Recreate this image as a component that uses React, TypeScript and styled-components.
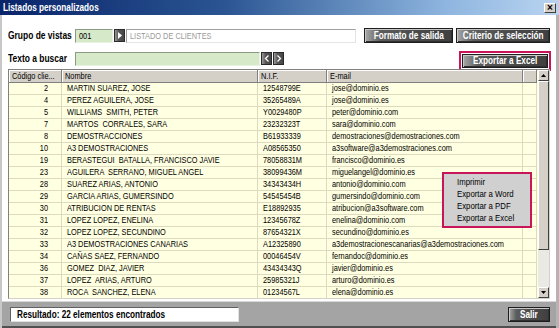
import React from "react"
import styled, { createGlobalStyle } from "styled-components"

const GlobalStyle = createGlobalStyle`
  html, body { margin: 0; padding: 0; background: #fff; }
  body {
    font-family: "Liberation Sans", Arial, sans-serif;
    font-size: 9px;
    color: #000;
  }
  * { box-sizing: border-box; }
`

type Row = { code: string; name: string; nif: string; email: string }

const rows: Row[] = [
  { code: "2", name: "MARTIN SUAREZ, JOSE", nif: "12548799E", email: "jose@dominio.es" },
  { code: "4", name: "PEREZ AGUILERA, JOSE", nif: "35265489A", email: "jose@dominio.es" },
  { code: "5", name: "WILLIAMS  SMITH, PETER", nif: "Y0029480P", email: "peter@dominio.com" },
  { code: "7", name: "MARTOS  CORRALES, SARA", nif: "23232323T", email: "sara@dominio.com" },
  { code: "8", name: "DEMOSTRACCIONES", nif: "B61933339", email: "demostraciones@demostraciones.com" },
  { code: "10", name: "A3 DEMOSTRACIONES", nif: "A08565350", email: "a3software@a3demostraciones.com" },
  { code: "19", name: "BERASTEGUI  BATALLA, FRANCISCO JAVIE", nif: "78058831M", email: "francisco@dominio.es" },
  { code: "23", name: "AGUILERA  SERRANO, MIGUEL ANGEL", nif: "38099436M", email: "miguelangel@dominio.es" },
  { code: "28", name: "SUAREZ ARIAS, ANTONIO", nif: "34343434H", email: "antonio@dominio.com" },
  { code: "29", name: "GARCIA ARIAS, GUMERSINDO", nif: "54545454B", email: "gumersindo@dominio.com" },
  { code: "30", name: "ATRIBUCION DE RENTAS", nif: "E18892935", email: "atribucion@a3software.com" },
  { code: "31", name: "LOPEZ LOPEZ, ENELINA", nif: "12345678Z", email: "enelina@dominio.com" },
  { code: "32", name: "LOPEZ LOPEZ, SECUNDINO", nif: "87654321X", email: "secundino@dominio.es" },
  { code: "33", name: "A3 DEMOSTRACIONES CANARIAS", nif: "A12325890", email: "a3demostracionescanarias@a3demostraciones.com" },
  { code: "34", name: "CAÑAS SAEZ, FERNANDO", nif: "00046454V", email: "fernandoc@dominio.es" },
  { code: "36", name: "GOMEZ  DIAZ, JAVIER", nif: "43434343Q", email: "javier@dominio.es" },
  { code: "37", name: "LOPEZ  ARIAS, ARTURO", nif: "25985321J", email: "arturo@dominio.es" },
  { code: "38", name: "ROCA  SANCHEZ, ELENA", nif: "01234567L", email: "elena@dominio.es" },
]

const menuItems = ["Imprimir", "Exportar a Word", "Exportar a PDF", "Exportar a Excel"]

const COLS = "53px 196px 69px 196px 14px"

export default function App() {
  return (
    <>
      <GlobalStyle />
      <Window>
        <TitleBar>
          <Title><T>Listados personalizados</T></Title>
          <CloseButton>×</CloseButton>
        </TitleBar>
        <Body>
          <FormRow>
            <Label><T>Grupo de vistas</T></Label>
            <GreenInput $width={38}><T>001</T></GreenInput>
            <SmallButton>
              <svg width="6" height="7" viewBox="0 0 6 7"><path d="M1 0 L5 3.5 L1 7 Z" fill="#fff" /></svg>
            </SmallButton>
            <TextInput><T>LISTADO DE CLIENTES</T></TextInput>
            <Spacer />
            <DarkButton $width={89}><T $o="center">Formato de salida</T></DarkButton>
            <DarkButton $width={94}><T $o="center">Criterio de selección</T></DarkButton>
          </FormRow>
          <FormRow $top={8}>
            <Label><T>Texto a buscar</T></Label>
            <GreenInput $width={185} />
            <NavGroup>
              <SmallButton>
                <svg width="6" height="7" viewBox="0 0 6 7"><path d="M4.5 0.5 L1.5 3.5 L4.5 6.5" stroke="#fff" strokeWidth="1.3" fill="none" /></svg>
              </SmallButton>
              <SmallButton>
                <svg width="6" height="7" viewBox="0 0 6 7"><path d="M1.5 0.5 L4.5 3.5 L1.5 6.5" stroke="#fff" strokeWidth="1.3" fill="none" /></svg>
              </SmallButton>
            </NavGroup>
            <Spacer />
            <Highlight>
              <DarkButton $width={86} $height={14}><T $o="center">Exportar a Excel</T></DarkButton>
            </Highlight>
          </FormRow>
          <TableFrame>
            <TableArea>
              <HeaderRow>
                <HeaderCell><T>Código clie...</T></HeaderCell>
                <HeaderCell><T>Nombre</T></HeaderCell>
                <HeaderCell><T>N.I.F.</T></HeaderCell>
                <HeaderCell><T>E-mail</T></HeaderCell>
                <HeaderCell />
              </HeaderRow>
              {rows.map(r => (
                <DataRow key={r.code}>
                  <Cell $align="right"><T $o="right">{r.code}</T></Cell>
                  <Cell><T>{r.name}</T></Cell>
                  <Cell><T>{r.nif}</T></Cell>
                  <Cell><T>{r.email}</T></Cell>
                  <Cell />
                </DataRow>
              ))}
            </TableArea>
            <ScrollBar>
              <ScrollArrow>
                <svg width="5" height="3" viewBox="0 0 5 3"><path d="M0 3 L2.5 0 L5 3 Z" fill="#000" /></svg>
              </ScrollArrow>
              <ScrollThumb />
              <ScrollTrack />
              <ScrollArrow>
                <svg width="5" height="3" viewBox="0 0 5 3"><path d="M0 0 L2.5 3 L5 0 Z" fill="#000" /></svg>
              </ScrollArrow>
            </ScrollBar>
            <ContextMenu>
              {menuItems.map(m => <MenuItem key={m}><T>{m}</T></MenuItem>)}
            </ContextMenu>
          </TableFrame>
          <StatusBar>
            <StatusBox><T>Resultado: 22 elementos encontrados</T></StatusBox>
            <Spacer />
            <DarkButton $width={42} $height={15}><T $o="center">Salir</T></DarkButton>
          </StatusBar>
        </Body>
      </Window>
    </>
  )
}

// the reference uses a narrow Tahoma-like face; squeeze Liberation Sans to its widths
const T = styled.span<{ $o?: "left" | "right" | "center" }>`
  display: inline-block;
  white-space: pre;
  transform: scaleX(0.82);
  transform-origin: ${p => p.$o ?? "left"} center;
`

const Window = styled.div`
  width: 559px;
  height: 328px;
  display: flex;
  flex-direction: column;
  background: #fff;
  overflow: hidden;
`

const TitleBar = styled.div`
  height: 15px;
  flex: none;
  display: flex;
  align-items: center;
  justify-content: space-between;
  padding: 0 3px 0 3px;
  background: linear-gradient(90deg, #0a246a 0%, #2a5592 40%, #8fb6e0 80%, #b9d4f0 100%);
`

const Title = styled.span`
  color: #fff;
  font-weight: bold;
  font-size: 10px;
`

const CloseButton = styled.span`
  width: 12px;
  height: 10px;
  display: flex;
  align-items: center;
  justify-content: center;
  background: #d4d0c8;
  border: 1px solid;
  border-color: #fff #404040 #404040 #fff;
  font-size: 10px;
  font-weight: bold;
  line-height: 1;
  color: #000;
`

const Body = styled.div`
  flex: 1;
  display: flex;
  flex-direction: column;
  padding: 13px 0 0 6px;
  border-left: 2px solid #c8c8c8;
  border-right: 3px solid #b4b4b4;
`

const FormRow = styled.div<{ $top?: number }>`
  display: flex;
  align-items: center;
  height: 15px;
  margin-top: ${p => p.$top ?? 0}px;
  padding-right: 6px;
`

const Label = styled.span`
  width: 67px;
  flex: none;
  font-weight: bold;
  font-size: 10.3px;
  white-space: nowrap;
`

const GreenInput = styled.div<{ $width: number }>`
  width: ${p => p.$width}px;
  height: 14px;
  flex: none;
  background: #d6e9c9;
  border: 1px solid;
  border-color: #8c9c84 #e8f2e0 #e8f2e0 #8c9c84;
  padding: 0 3px;
  line-height: 12px;
`

const SmallButton = styled.div`
  width: 11px;
  height: 13px;
  flex: none;
  margin-left: 1px;
  display: flex;
  align-items: center;
  justify-content: center;
  background: linear-gradient(90deg, #9a9a9a, #555 40%, #474747);
  border: 1px solid #2a2a2a;
`

const NavGroup = styled.div`
  display: flex;
  gap: 0;
  margin-left: 0;
`

const TextInput = styled.div`
  width: 230px;
  height: 14px;
  flex: none;
  margin-left: 1px;
  padding: 0 3px;
  line-height: 12px;
  color: #9a9a9a;
  background: #fff;
  border: 1px solid;
  border-color: #a0a0a0 #e4e4e4 #e4e4e4 #a0a0a0;
`

const Spacer = styled.div`
  flex: 1;
`

const DarkButton = styled.div<{ $width: number; $height?: number }>`
  width: ${p => p.$width}px;
  height: ${p => p.$height ?? 15}px;
  flex: none;
  margin-left: 3px;
  display: flex;
  align-items: center;
  justify-content: center;
  color: #fff;
  font-weight: bold;
  font-size: 10px;
  white-space: nowrap;
  background: linear-gradient(90deg, #a8a8a8 0%, #5c5c5c 18%, #4a4a4a 60%, #404040 100%);
  border: 1px solid #1e1e1e;
  box-shadow: inset 1px 1px 0 #c8c8c8, inset -1px -1px 0 #303030;
`

const Highlight = styled.div`
  padding: 1px;
  border: 2px solid #c8155a;
  margin-top: 4px;
  margin-right: -1px;
  & > div { margin-left: 0; }
`

const TableFrame = styled.div`
  position: relative;
  margin: 3px 6px 0 0;
  height: 230px;
  display: flex;
  border: 1px solid;
  border-color: #808080 #d4d0c8 #d4d0c8 #808080;
  background: #ffffe1;
`

const TableArea = styled.div`
  flex: 1;
  overflow: hidden;
`

const HeaderRow = styled.div`
  display: grid;
  grid-template-columns: ${COLS};
  height: 13px;
`

const HeaderCell = styled.div`
  background: #d4d0c8;
  border-right: 1px solid #808080;
  border-bottom: 1px solid #808080;
  box-shadow: inset 1px 1px 0 #fff;
  padding: 0 3px;
  line-height: 12px;
  white-space: nowrap;
  overflow: hidden;
`

const DataRow = styled.div`
  display: grid;
  grid-template-columns: ${COLS};
  height: 12px;
  background: #ffffe1;
`

const Cell = styled.div<{ $align?: "right" }>`
  border-right: 1px solid #dedac0;
  border-bottom: 1px solid #dedac0;
  padding: 0 4px 0 5px;
  padding-right: ${p => (p.$align === "right" ? "13px" : "4px")};
  text-align: ${p => p.$align ?? "left"};
  line-height: 11px;
  white-space: pre;
  overflow: hidden;
`

const ScrollBar = styled.div`
  width: 11px;
  flex: none;
  display: flex;
  flex-direction: column;
  background: #d4d0c8;
`

const ScrollArrow = styled.div`
  height: 11px;
  flex: none;
  display: flex;
  align-items: center;
  justify-content: center;
  background: #d4d0c8;
  border: 1px solid;
  border-color: #fff #404040 #404040 #fff;
`

const ScrollThumb = styled.div`
  height: 169px;
  flex: none;
  background: #d4d0c8;
  border: 1px solid;
  border-color: #fff #404040 #404040 #fff;
`

const ScrollTrack = styled.div`
  flex: 1;
  background: #ebe9e3;
`

const ContextMenu = styled.div`
  position: absolute;
  left: 433px;
  top: 102px;
  width: 90px;
  padding: 2px 0 2px 13px;
  background: #d0d0d0;
  border: 2px solid #c8155a;
`

const MenuItem = styled.div`
  height: 12px;
  line-height: 12px;
  font-size: 9.5px;
  white-space: nowrap;
`

const StatusBar = styled.div`
  flex: 1;
  margin-left: -6px;
  margin-top: 2px;
  display: flex;
  align-items: center;
  padding: 0 6px 0 8px;
  background: #a4a4a4;
  border-top: 1px solid #d8d8d8;
  border-bottom: 2px solid #505050;
`

const StatusBox = styled.div`
  width: 229px;
  height: 15px;
  padding-left: 6px;
  line-height: 13px;
  font-weight: bold;
  font-size: 10px;
  white-space: nowrap;
  background: #fff;
  border: 1px solid;
  border-color: #606060 #e0e0e0 #e0e0e0 #606060;
`
